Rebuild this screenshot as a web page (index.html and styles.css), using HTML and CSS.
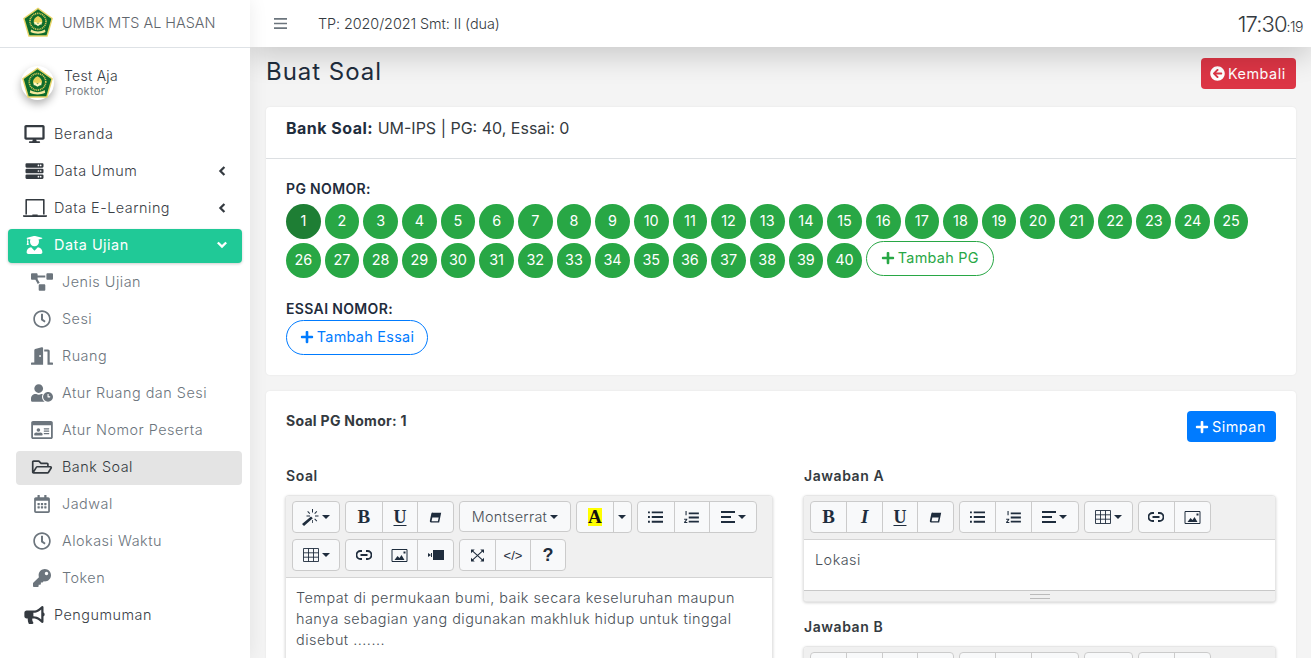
FILE: index.html
```html
<!DOCTYPE html>
<html lang="id">
<head>
<meta charset="utf-8">
<title>Buat Soal</title>
<link rel="stylesheet" href="styles.css">
</head>
<body>
<svg class="sprite" width="0" height="0" aria-hidden="true">
  <symbol id="logo" viewBox="0 0 60 60">
    <path d="M30 1 58 21 48 56H12L2 21Z" fill="#e9d56a"/>
    <path d="M30 4 55 22 46 53H14L5 22Z" fill="#0d6b2b"/>
    <circle cx="30" cy="27" r="15" fill="none" stroke="#d8c75a" stroke-width="3" stroke-dasharray="2 1.4"/>
    <path d="M30 17c6 3 9 7 8 13H22c-1-6 2-10 8-13Z" fill="#e8d25a"/>
    <path d="M23 28c4 0 6 1 7 4 1-3 3-4 7-4v5c-3 0-5 1-7 3-2-2-4-3-7-3Z" fill="#fff6c0"/>
    <path d="M17 42c8 5 18 5 26 0l1 5c-8 4-20 4-28 0Z" fill="#f3e79a"/>
  </symbol>
  <symbol id="i-desktop" viewBox="0 0 576 512"><path d="M528 0H48C21.5 0 0 21.5 0 48v320c0 26.5 21.5 48 48 48h192l-16 48h-72c-13.3 0-24 10.7-24 24s10.7 24 24 24h272c13.3 0 24-10.700 24-24s-10.700-24-24-24h-72l-16-48h192c26.500 0 48-21.500 48-48V48c0-26.500-21.500-48-48-48zm-16 352H64V64h448v288z"/></symbol>
  <symbol id="i-server" viewBox="0 0 512 512"><path fill-rule="evenodd" d="M32 32h448a32 32 0 0 1 32 32v64a32 32 0 0 1-32 32H32a32 32 0 0 1-32-32V64a32 32 0 0 1 32-32Zm400 40a24 24 0 1 0 0 48 24 24 0 0 0 0-48Zm-64 0a24 24 0 1 0 0 48 24 24 0 0 0 0-48ZM32 192h448a32 32 0 0 1 32 32v64a32 32 0 0 1-32 32H32a32 32 0 0 1-32-32v-64a32 32 0 0 1 32-32Zm400 40a24 24 0 1 0 0 48 24 24 0 0 0 0-48Zm-64 0a24 24 0 1 0 0 48 24 24 0 0 0 0-48ZM32 352h448a32 32 0 0 1 32 32v64a32 32 0 0 1-32 32H32a32 32 0 0 1-32-32v-64a32 32 0 0 1 32-32Zm400 40a24 24 0 1 0 0 48 24 24 0 0 0 0-48Zm-64 0a24 24 0 1 0 0 48 24 24 0 0 0 0-48Z"/></symbol>
  <symbol id="i-laptop" viewBox="0 0 640 480"><path fill-rule="evenodd" d="M84 0h472a20 20 0 0 1 20 20v390h-42V42H106v368H64V20A20 20 0 0 1 84 0ZM0 430h250v-14h140v14h250v24a26 26 0 0 1-26 26H26a26 26 0 0 1-26-26Z"/></symbol>
  <symbol id="i-grad" viewBox="0 0 448 512"><path d="M319.400 320.600 224 416l-95.400-95.400C57.100 323.700 0 382.200 0 454.400v9.600c0 26.500 21.500 48 48 48h352c26.500 0 48-21.500 48-48v-9.600c0-72.200-57.100-130.700-128.600-133.800ZM13.600 79.800l6.400 1.500v58.400c-7 4.200-12 11.500-12 20.300 0 8.400 4.600 15.400 11.100 19.700L3.500 242c-1.700 6.900 2.100 14 7.600 14h41.800c5.500 0 9.300-7.100 7.600-14l-15.600-62.300C51.400 175.400 56 168.400 56 160c0-8.800-5-16.100-12-20.300V87.100l66 15.900c-8.600 17.200-14 36.400-14 57 0 70.700 57.300 128 128 128s128-57.300 128-128c0-20.600-5.300-39.800-14-57l96.300-23.200c18.200-4.400 18.200-27.100 0-31.500l-190.400-46c-13-3.100-26.700-3.100-39.700 0L13.600 48.200c-18.100 4.400-18.100 27.200 0 31.600Z"/></symbol>
  <symbol id="i-diagram" viewBox="0 0 640 512"><path d="M384 320H256c-17.700 0-32 14.300-32 32v128c0 17.700 14.300 32 32 32h128c17.700 0 32-14.300 32-32V352c0-17.700-14.300-32-32-32ZM192 32c0-17.700-14.300-32-32-32H32C14.300 0 0 14.300 0 32v128c0 17.700 14.300 32 32 32h95.700l73.200 128c11-19.100 31.600-32 55.100-32h.3L192 175.300V128h224V64H192V32ZM608 0H480c-17.700 0-32 14.300-32 32v128c0 17.700 14.300 32 32 32h128c17.700 0 32-14.300 32-32V32c0-17.700-14.300-32-32-32Z"/></symbol>
  <symbol id="i-clock" viewBox="0 0 512 512"><path d="M256 8C119 8 8 119 8 256s111 248 248 248 248-111 248-248S393 8 256 8Zm0 448c-110.500 0-200-89.500-200-200S145.500 56 256 56s200 89.500 200 200-89.500 200-200 200Zm61.800-104.400-84.900-61.700c-3.100-2.300-4.900-5.900-4.900-9.700V116c0-6.600 5.400-12 12-12h32c6.600 0 12 5.400 12 12v141.700l66.800 48.600c5.400 3.900 6.500 11.400 2.600 16.800L334.600 349c-3.900 5.300-11.400 6.500-16.800 2.600Z"/></symbol>
  <symbol id="i-door" viewBox="0 0 640 512"><path d="M624 448h-80V113.450C544 86.190 522.470 64 496 64H384v64h96v384h144c8.840 0 16-7.160 16-16v-32c0-8.840-7.160-16-16-16ZM312.240 1.010l-192 49.740C105.990 54.440 96 67.700 96 82.920V448H16c-8.840 0-16 7.160-16 16v32c0 8.840 7.160 16 16 16h336V33.180c0-21.580-19.560-37.410-39.760-32.170ZM264 288c-13.250 0-24-14.330-24-32s10.750-32 24-32 24 14.330 24 32-10.750 32-24 32Z"/></symbol>
  <symbol id="i-userclock" viewBox="0 0 640 512"><path d="M496 224c-79.590 0-144 64.410-144 144s64.410 144 144 144 144-64.410 144-144-64.410-144-144-144Zm64 150.290c0 5.340-4.370 9.710-9.710 9.710h-60.570c-5.340 0-9.710-4.370-9.710-9.710v-76.570c0-5.340 4.370-9.710 9.710-9.710h12.570c5.340 0 9.710 4.370 9.710 9.710V352h38.290c5.340 0 9.710 4.370 9.710 9.710v12.580ZM320 368c0-27.770 7.180-53.800 19.720-76.570-7.700-1.400-15.550-3.430-23.720-3.430h-16.700c-22.200 10.200-46.900 16-72.300 16s-50-5.800-72.300-16H134.400C60.200 288 0 348.200 0 422.400V464c0 26.500 21.500 48 48 48h347.100C349.900 480.700 320 428.100 320 368ZM224 256c70.700 0 128-57.300 128-128S294.700 0 224 0 96 57.300 96 128s57.300 128 128 128Z"/></symbol>
  <symbol id="i-idcard" viewBox="0 0 576 480"><path d="M528 0H48C21.500 0 0 21.500 0 48v384c0 26.500 21.500 48 48 48h480c26.500 0 48-21.500 48-48V48c0-26.500-21.500-48-48-48Zm0 432H48V112h480v320ZM192 288a48 48 0 1 0 0-96 48 48 0 0 0 0 96Zm-96 96h192c8.800 0 16-6 16-16v-16c0-26.500-25-48-56-48h-8c-15 8-30 10-48 10s-33-2-48-10h-8c-31 0-56 21.500-56 48v16c0 10 7.200 16 16 16Zm248-32h128c4.400 0 8-3.600 8-8v-16c0-4.400-3.600-8-8-8H344c-4.400 0-8 3.600-8 8v16c0 4.400 3.600 8 8 8Zm0-64h128c4.400 0 8-3.600 8-8v-16c0-4.400-3.600-8-8-8H344c-4.400 0-8 3.600-8 8v16c0 4.400 3.600 8 8 8Zm0-64h128c4.400 0 8-3.600 8-8v-16c0-4.400-3.600-8-8-8H344c-4.400 0-8 3.600-8 8v16c0 4.400 3.600 8 8 8Z"/></symbol>
  <symbol id="i-folder" viewBox="0 0 576 512"><path d="M527.900 224H480v-48c0-26.500-21.500-48-48-48H272l-64-64H48C21.500 64 0 85.500 0 112v288c0 26.500 21.500 48 48 48h400c16.500 0 31.900-8.500 40.700-22.600l79.900-128c20-31.900-3-73.400-40.700-73.400ZM48 118c0-3.300 2.700-6 6-6h134.100l64 64H426c3.300 0 6 2.700 6 6v42H152c-16.800 0-32.400 8.800-41.100 23.200L48 351.400V118Zm400 282H72l77.200-128H528l-80 128Z"/></symbol>
  <symbol id="i-calendar" viewBox="0 0 448 512"><path d="M148 288h-40c-6.600 0-12-5.400-12-12v-40c0-6.600 5.400-12 12-12h40c6.600 0 12 5.400 12 12v40c0 6.600-5.400 12-12 12Zm108-12v-40c0-6.600-5.400-12-12-12h-40c-6.600 0-12 5.400-12 12v40c0 6.600 5.400 12 12 12h40c6.600 0 12-5.400 12-12Zm96 0v-40c0-6.600-5.400-12-12-12h-40c-6.600 0-12 5.400-12 12v40c0 6.600 5.400 12 12 12h40c6.600 0 12-5.400 12-12Zm-96 96v-40c0-6.600-5.400-12-12-12h-40c-6.600 0-12 5.400-12 12v40c0 6.600 5.400 12 12 12h40c6.600 0 12-5.400 12-12Zm-96 0v-40c0-6.600-5.400-12-12-12h-40c-6.600 0-12 5.400-12 12v40c0 6.600 5.400 12 12 12h40c6.600 0 12-5.400 12-12Zm192 0v-40c0-6.600-5.400-12-12-12h-40c-6.600 0-12 5.400-12 12v40c0 6.600 5.400 12 12 12h40c6.600 0 12-5.400 12-12Zm96-260v352c0 26.500-21.500 48-48 48H48c-26.500 0-48-21.500-48-48V112c0-26.500 21.500-48 48-48h48V12c0-6.600 5.400-12 12-12h40c6.600 0 12 5.400 12 12v52h128V12c0-6.600 5.400-12 12-12h40c6.600 0 12 5.400 12 12v52h48c26.500 0 48 21.500 48 48Zm-48 346V160H48v298c0 3.300 2.700 6 6 6h340c3.300 0 6-2.700 6-6Z"/></symbol>
  <symbol id="i-key" viewBox="0 0 512 512"><path d="M512 176.001C512 273.203 433.202 352 336 352c-11.220 0-22.190-1.062-32.827-3.069l-24.012 27.014A23.999 23.999 0 0 1 261.223 384H224v40c0 13.255-10.745 24-24 24h-40v40c0 13.255-10.745 24-24 24H24c-13.255 0-24-10.745-24-24v-78.059c0-6.365 2.529-12.470 7.029-16.971l161.802-161.802C163.108 213.814 160 195.271 160 176 160 78.798 238.797.001 335.999 0 433.488-.001 512 78.511 512 176.001ZM336 128c0 26.510 21.490 48 48 48s48-21.490 48-48-21.490-48-48-48-48 21.490-48 48Z"/></symbol>
  <symbol id="i-bullhorn" viewBox="0 0 576 512"><path d="M576 240c0-23.630-12.950-44.040-32-55.120V32.010C544 23.260 537.020 0 512 0c-7.120 0-14.190 2.380-19.980 7.020l-85.030 68.030C364.280 109.190 310.660 128 256 128H64c-35.350 0-64 28.650-64 64v96c0 35.350 28.650 64 64 64h33.700c-1.390 10.480-2.180 21.140-2.180 32 0 39.770 9.260 77.350 25.560 110.940 5.190 10.690 16.520 17.060 28.400 17.060h74.280c26.050 0 41.690-29.840 25.900-50.560-16.400-21.520-26.150-48.360-26.150-77.440 0-11.110 1.620-21.790 4.410-32H256c54.660 0 108.280 18.810 150.980 52.950l85.030 68.030a32.023 32.023 0 0 0 19.980 7.020c24.920 0 32-22.780 32-32V295.130C563.050 284.040 576 263.630 576 240Zm-96 141.420-33.050-26.440C392.950 311.780 325.120 288 256 288v-96c69.120 0 136.950-23.780 190.950-66.980L480 98.580v282.840Z"/></symbol>
  <symbol id="i-plus" viewBox="0 0 448 512"><path d="M416 208H272V64c0-17.670-14.330-32-32-32h-32c-17.670 0-32 14.330-32 32v144H32c-17.670 0-32 14.330-32 32v32c0 17.670 14.330 32 32 32h144v144c0 17.670 14.330 32 32 32h32c17.670 0 32-14.330 32-32V304h144c17.670 0 32-14.330 32-32v-32c0-17.670-14.330-32-32-32Z"/></symbol>
  <symbol id="i-back" viewBox="0 0 512 512"><path d="M256 504C119 504 8 393 8 256S119 8 256 8s248 111 248 248-111 248-248 248Zm28.900-143.600L209.400 288H392c13.300 0 24-10.700 24-24v-16c0-13.300-10.700-24-24-24H209.400l75.500-72.400c9.700-9.300 9.900-24.800.4-34.300l-11-10.900c-9.400-9.400-24.600-9.400-33.900 0L107.700 239c-9.400 9.400-9.400 24.600 0 33.900l132.700 132.700c9.400 9.400 24.600 9.400 33.900 0l11-10.900c9.500-9.500 9.300-25-.4-34.300Z"/></symbol>
  <symbol id="e-magic" viewBox="0 0 17 17"><path d="M0 15 9 7.500l1.800 1.800L2 17zM10 0h1v3.500h-1zM10 11h.8v3H10zM13 6.500h3.500v1H13zM4.500 6.500H8v1H4.500zM14.500 2l.7.700-2.200 2.200-.7-.7zM6 2l2.200 2.200-.7.700-2.200-2.200zM13 9.500l2.200 2.200-.7.700-2.200-2.200z"/></symbol>
  <symbol id="e-eraser" viewBox="0 0 16 14"><path fill-rule="evenodd" d="M5 1h10l-2.500 12H2.500A1.500 1.500 0 0 1 1 11.300L2.800 2.500A2 2 0 0 1 5 1Zm-.9 6-.9 4.200c0 .3.100.5.500.5h7.200l1-4.700Z"/></symbol>
  <symbol id="e-ul" viewBox="0 0 16 12"><path d="M0 0h2v2H0zM4 0h12v2H4zM0 5h2v2H0zM4 5h12v2H4zM0 10h2v2H0zM4 10h12v2H4z"/></symbol>
  <symbol id="e-ol" viewBox="0 0 16 13"><path d="M5 1.500h11v2H5zM5 6h11v2H5zM5 10.500h11v2H5zM1.500 0h1.200v4.500H1.500zM0 8.500h3.400v1.100L1.600 11.900h1.900V13H0v-1L2 9.600H0z"/></symbol>
  <symbol id="e-align" viewBox="0 0 14 12"><path d="M0 0h14v2H0zM0 5h10v2H0zM0 10h14v2H0z"/></symbol>
  <symbol id="e-table" viewBox="0 0 16 14"><path fill="none" stroke="currentColor" stroke-width=".9" d="M.5.500h15v13H.5zM.5 4.800h15M.5 9.200h15M5.500.500v13M10.500.500v13"/></symbol>
  <symbol id="e-link" viewBox="0 0 16 10"><path fill="none" stroke="currentColor" stroke-width="1.800" d="M6 1H4.500a4 4 0 0 0 0 8H6M10 1h1.500a4 4 0 0 1 0 8H10M4.500 5h7"/></symbol>
  <symbol id="e-pic" viewBox="0 0 16 13"><path fill="none" stroke="currentColor" d="M.5.500h15v12H.5z"/><path d="M3 11l3-4 2 2 2-3 3 5zM12 2.500h2v2h-2z"/></symbol>
  <symbol id="e-video" viewBox="0 0 16 10"><path d="M5 0h11v10H5zM0 3l3 2-3 2zM3 3h1v4H3z"/></symbol>
  <symbol id="e-full" viewBox="0 0 14 13"><path d="M0 0h4L0 4zM14 0h-4l4 4zM0 13h4l-4-4zM14 13h-4l4-4z"/><path fill="none" stroke="currentColor" stroke-width="1.200" d="M1.500 1.500 12.500 11.500M12.500 1.500 1.500 11.500"/></symbol>
</svg>

<div class="app">
  <aside class="sidebar">
    <div class="brand">
      <svg class="brand-logo"><use href="#logo"/></svg>
      <span class="brand-text">UMBK MTS AL HASAN</span>
    </div>
    <div class="user">
      <span class="avatar"><svg class="avatar-logo"><use href="#logo"/></svg></span>
      <div class="user-info">
        <div class="user-name">Test Aja</div>
        <div class="user-role">Proktor</div>
      </div>
    </div>
    <nav class="nav">
      <a class="nav-item"><svg class="nav-icon"><use href="#i-desktop"/></svg><span>Beranda</span></a>
      <a class="nav-item"><svg class="nav-icon"><use href="#i-server"/></svg><span>Data Umum</span><svg class="chev" viewBox="0 0 10 12"><path d="M8 1 3 6l5 5" fill="none" stroke="currentColor" stroke-width="2.800"/></svg></a>
      <a class="nav-item"><svg class="nav-icon nav-icon-wide"><use href="#i-laptop"/></svg><span>Data E-Learning</span><svg class="chev" viewBox="0 0 10 12"><path d="M8 1 3 6l5 5" fill="none" stroke="currentColor" stroke-width="2.800"/></svg></a>
      <a class="nav-item active"><svg class="nav-icon"><use href="#i-grad"/></svg><span>Data Ujian</span><svg class="chev chev-down" viewBox="0 0 12 10"><path d="m1 2 5 5 5-5" fill="none" stroke="currentColor" stroke-width="2.800"/></svg></a>
      <a class="nav-item sub"><svg class="nav-icon"><use href="#i-diagram"/></svg><span>Jenis Ujian</span></a>
      <a class="nav-item sub"><svg class="nav-icon"><use href="#i-clock"/></svg><span>Sesi</span></a>
      <a class="nav-item sub"><svg class="nav-icon"><use href="#i-door"/></svg><span>Ruang</span></a>
      <a class="nav-item sub"><svg class="nav-icon"><use href="#i-userclock"/></svg><span>Atur Ruang dan Sesi</span></a>
      <a class="nav-item sub"><svg class="nav-icon"><use href="#i-idcard"/></svg><span>Atur Nomor Peserta</span></a>
      <a class="nav-item sub selected"><svg class="nav-icon"><use href="#i-folder"/></svg><span>Bank Soal</span></a>
      <a class="nav-item sub"><svg class="nav-icon"><use href="#i-calendar"/></svg><span>Jadwal</span></a>
      <a class="nav-item sub"><svg class="nav-icon"><use href="#i-clock"/></svg><span>Alokasi Waktu</span></a>
      <a class="nav-item sub"><svg class="nav-icon"><use href="#i-key"/></svg><span>Token</span></a>
      <a class="nav-item"><svg class="nav-icon"><use href="#i-bullhorn"/></svg><span>Pengumuman</span></a>
    </nav>
  </aside>

  <div class="main">
    <header class="topbar">
      <svg class="burger" viewBox="0 0 12 10"><path d="M0 0h12v1.600H0zM0 4.200h12v1.600H0zM0 8.400h12V10H0z"/></svg>
      <span class="period">TP: 2020/2021 Smt: II (dua)</span>
      <span class="clock">17:30<small>:19</small></span>
    </header>
    <main class="content">
      <div class="page-head">
        <h1 class="page-title">Buat Soal</h1>
        <a class="btn btn-red"><svg class="btn-icon btn-icon-lg"><use href="#i-back"/></svg>Kembali</a>
      </div>

      <section class="card">
        <div class="card-head"><b>Bank Soal:</b> UM-IPS | PG: 40, Essai: 0</div>
        <div class="card-body">
          <div class="label">PG NOMOR:</div>
          <div class="numbers">
            <a class="num current">1</a><a class="num">2</a><a class="num">3</a><a class="num">4</a><a class="num">5</a><a class="num">6</a><a class="num">7</a><a class="num">8</a><a class="num">9</a><a class="num">10</a>
            <a class="num">11</a><a class="num">12</a><a class="num">13</a><a class="num">14</a><a class="num">15</a><a class="num">16</a><a class="num">17</a><a class="num">18</a><a class="num">19</a><a class="num">20</a>
            <a class="num">21</a><a class="num">22</a><a class="num">23</a><a class="num">24</a><a class="num">25</a><a class="num">26</a><a class="num">27</a><a class="num">28</a><a class="num">29</a><a class="num">30</a>
            <a class="num">31</a><a class="num">32</a><a class="num">33</a><a class="num">34</a><a class="num">35</a><a class="num">36</a><a class="num">37</a><a class="num">38</a><a class="num">39</a><a class="num">40</a>
            <a class="pill pill-green"><svg class="btn-icon"><use href="#i-plus"/></svg>Tambah PG</a>
          </div>
          <div class="label label-essai">ESSAI NOMOR:</div>
          <a class="pill pill-blue"><svg class="btn-icon"><use href="#i-plus"/></svg>Tambah Essai</a>
        </div>
      </section>

      <section class="card card-soal">
        <div class="soal-head">
          <b class="soal-title">Soal PG Nomor: 1</b>
          <a class="btn btn-blue"><svg class="btn-icon"><use href="#i-plus"/></svg>Simpan</a>
        </div>
        <div class="soal-grid">
          <div>
            <div class="field-label">Soal</div>
            <div class="editor">
              <div class="toolbar">
                <div class="grp"><span class="tb w45"><svg class="ic17"><use href="#e-magic"/></svg><i class="caret"></i></span></div>
                <div class="grp"><span class="tb glyph-b">B</span><span class="tb glyph-u">U</span><span class="tb"><svg class="ic13"><use href="#e-eraser"/></svg></span></div>
                <div class="grp grp-font"><span class="tb tb-font">Montserrat<i class="caret"></i></span></div>
                <div class="grp"><span class="tb"><span class="hl">A</span></span><span class="tb w18"><i class="caret caret-solo"></i></span></div>
                <div class="grp"><span class="tb"><svg class="ic15"><use href="#e-ul"/></svg></span><span class="tb"><svg class="ic15"><use href="#e-ol"/></svg></span><span class="tb w46"><svg class="ic14"><use href="#e-align"/></svg><i class="caret"></i></span></div>
                <div class="grp"><span class="tb w45"><svg class="ic16 thin"><use href="#e-table"/></svg><i class="caret"></i></span></div>
                <div class="grp"><span class="tb"><svg class="ic16 h10"><use href="#e-link"/></svg></span><span class="tb"><svg class="ic17w"><use href="#e-pic"/></svg></span><span class="tb"><svg class="ic16 h10"><use href="#e-video"/></svg></span></div>
                <div class="grp grp-tight"><span class="tb"><svg class="ic13"><use href="#e-full"/></svg></span><span class="tb glyph-code">&lt;/&gt;</span><span class="tb glyph-q">?</span></div>
              </div>
              <div class="editable">Tempat di permukaan bumi, baik secara keseluruhan maupun hanya sebagian yang digunakan makhluk hidup untuk tinggal disebut .......</div>
            </div>
          </div>
          <div>
            <div class="field-label">Jawaban A</div>
            <div class="editor">
              <div class="toolbar">
                <div class="grp grp-four"><span class="tb glyph-b">B</span><span class="tb glyph-i">I</span><span class="tb glyph-u">U</span><span class="tb"><svg class="ic13"><use href="#e-eraser"/></svg></span></div>
                <div class="grp"><span class="tb"><svg class="ic15"><use href="#e-ul"/></svg></span><span class="tb"><svg class="ic15"><use href="#e-ol"/></svg></span><span class="tb w46"><svg class="ic14"><use href="#e-align"/></svg><i class="caret"></i></span></div>
                <div class="grp"><span class="tb w47"><svg class="ic16 thin"><use href="#e-table"/></svg><i class="caret"></i></span></div>
                <div class="grp"><span class="tb"><svg class="ic16 h10"><use href="#e-link"/></svg></span><span class="tb"><svg class="ic17w"><use href="#e-pic"/></svg></span></div>
              </div>
              <div class="editable editable-short">Lokasi</div>
              <div class="statusbar"><i class="grip"></i></div>
            </div>
            <div class="field-label field-next">Jawaban B</div>
            <div class="editor">
              <div class="toolbar">
                <div class="grp grp-four"><span class="tb"></span><span class="tb"></span><span class="tb"></span><span class="tb"></span></div>
                <div class="grp"><span class="tb"></span><span class="tb"></span><span class="tb w46"></span></div>
                <div class="grp"><span class="tb w47"></span></div>
                <div class="grp"><span class="tb"></span><span class="tb"></span></div>
              </div>
            </div>
          </div>
        </div>
      </section>
    </main>
  </div>
</div>
</body>
</html>
```

FILE: styles.css
```css
* { box-sizing: border-box; }
html, body { margin: 0; height: 658px; overflow: hidden; }
body {
  font-family: Inter, "Noto Sans", sans-serif;
  font-size: 14px;
  color: #1f2d3d;
  background: #f4f4f4;
}
a { text-decoration: none; }
.sprite { position: absolute; }

.app { display: flex; height: 658px; }

/* sidebar */
.sidebar {
  width: 250px;
  flex: none;
  background: #fff;
  box-shadow: 0 0 18px rgba(0,0,0,.08);
  position: relative;
  z-index: 2;
}
.brand {
  height: 48px;
  border-bottom: 1px solid #dee2e6;
  display: flex;
  align-items: center;
  padding: 0 0 2px 22px;
}
.brand-logo { width: 32px; height: 32px; margin-right: 8px; }
.brand-text { font-size: 14.4px; font-weight: 300; color: #5f666d; letter-spacing: 0; white-space: nowrap; }
.user { display: flex; align-items: center; height: 70px; padding: 0 0 0 21px; }
.avatar {
  width: 33px; height: 34px; border-radius: 50%;
  background: #fff;
  box-shadow: 0 4px 8px rgba(0,0,0,.3);
  display: flex; align-items: center; justify-content: center;
  margin-right: 10px;
}
.avatar-logo { width: 33px; height: 33px; }
.user-info { margin-top: -2px; }
.user-name { font-size: 14px; line-height: 17px; color: #343a40; font-weight: 300; letter-spacing: .02em; }
.user-role { font-size: 11px; line-height: 12px; margin: 1px 0 0 1px; color: #7b8288; letter-spacing: .03em; }

.nav { display: flex; flex-direction: column; gap: 3px; padding: 0 8px; }
.nav-item {
  height: 34px;
  padding: 0 12px 3px 16px;
  display: flex;
  align-items: center;
  border-radius: 4px;
  color: #3a4046;
  font-size: 14.4px;
  font-weight: 300;
  letter-spacing: .035em;
}
.nav-item > span { flex: 1; }
.nav-icon { width: 21px; height: 18px; margin-right: 9px; fill: #343a40; flex: none; }
.nav-icon-wide { width: 24px; margin-left: -1px; margin-right: 7px; }
.chev { width: 8px; height: 10px; color: #343a40; flex: none; margin-right: 4px; }
.nav-item.active {
  background: #20c997;
  color: #fff;
  font-weight: 400;
  box-shadow: 0 1px 3px rgba(0,0,0,.2);
}
.active .nav-icon { fill: #fff; }
.chev-down { width: 10px; color: #fff; margin-right: 3px; }
.nav-item.sub { margin-left: 8px; padding-left: 15px; color: #6c757d; }
.sub .nav-icon { fill: #6c757d; width: 22px; margin-right: 9px; }
.nav-item.selected { background: #e4e4e4; color: #343a40; }
.selected .nav-icon { fill: #343a40; }

/* main column */
.main { flex: 1; min-width: 0; display: flex; flex-direction: column; }
.topbar {
  height: 47px;
  flex: none;
  background: #fff;
  display: flex;
  align-items: center;
  padding: 0 8px 0 24px;
  box-shadow: 0 10px 28px rgba(0,0,0,.17);
  position: relative;
  z-index: 1;
}
.burger { width: 13px; height: 11px; fill: #6c757d; margin-right: 31px; }
.period { font-size: 14.4px; font-weight: 300; color: #343a40; flex: 1; letter-spacing: -.07px; }
.clock { font-size: 22px; font-weight: 300; color: #343a40; letter-spacing: -.9px; }
.clock small { font-size: 14px; letter-spacing: -.5px; }

.content { padding: 11px 15px 0 16px; }
.page-head { display: flex; justify-content: space-between; align-items: flex-start; margin-bottom: 18px; }
.page-title { margin: 0; font-size: 24px; line-height: 28px; font-weight: 400; color: #1f2d3d; letter-spacing: .04em; }

.btn {
  display: inline-flex; align-items: center;
  height: 31px; padding: 0 10px 0 9px;
  border-radius: 4px; color: #fff;
  font-size: 14.4px; letter-spacing: .035em;
}
.btn-red { background: #dc3545; width: 95px; }
.btn-blue { background: #007bff; padding-left: 8px; width: 89px; }
.btn-icon { width: 14px; height: 14px; fill: currentColor; margin-right: 3px; flex: none; }
.btn-icon-lg { width: 15px; height: 15px; }

.card { background: #fff; border-radius: 4px; box-shadow: 0 0 2px rgba(0,0,0,.08); margin-bottom: 16px; }
.card-head {
  height: 52px;
  padding: 11px 20px 0;
  font-size: 16px;
  line-height: 20px;
  border-bottom: 1px solid #dcdfe2;
  color: #343a40;
}
.card-head b { font-weight: 700; color: #1f2d3d; letter-spacing: .03em; }
.card-body { padding: 19px 20px 20px; height: 216px; }
.label { font-size: 14px; line-height: 21px; font-weight: 600; color: #1f2d3d; letter-spacing: .025em; }
.numbers { display: flex; flex-wrap: wrap; gap: 4px; margin-top: 5px; }
.num {
  width: 34.67px; height: 35px; border-radius: 50%;
  background: #28a745; color: #fff;
  display: flex; align-items: center; justify-content: center;
  font-size: 14.4px; padding-bottom: 3px;
}
.num.current { background: #1e7e34; }
.pill {
  display: inline-flex; align-items: center; justify-content: center;
  height: 35px; border-radius: 18px; background: #fff;
  border: 1px solid; font-size: 14.4px; padding-bottom: 2px; letter-spacing: .02em;
}
.pill-green { color: #28a745; border-color: #28a745; width: 128px; margin-top: -2px; }
.pill-blue { color: #007bff; border-color: #007bff; width: 142px; margin-top: 1px; }
.label-essai { margin-top: 20px; }

.card-soal { padding: 20px 20px 0; }
.soal-head { display: flex; justify-content: space-between; align-items: flex-start; height: 31px; }
.soal-title { font-size: 14px; line-height: 20px; font-weight: 700; color: #343a40; letter-spacing: .02em; }
.soal-grid { display: grid; grid-template-columns: 487px 472px; column-gap: 31px; margin-top: 23px; }
.field-label { font-size: 14px; line-height: 21px; font-weight: 600; color: #343a40; margin-bottom: 9px; letter-spacing: .04em; }
.field-next { margin-top: 14px; }

.editor {
  margin-left: -1px;
  background: #fff;
  border: 1px solid #e6e6e6;
  border-radius: 4px;
  box-shadow: 0 1px 3px rgba(0,0,0,.18);
  overflow: hidden;
}
.toolbar {
  background: #f0f0f0;
  padding: 5px 6px 6px;
  display: flex; flex-wrap: wrap; gap: 6px 5px;
  border-bottom: 1px solid #d4d4d4;
}
.grp {
  display: flex; height: 32px;
  background: #f8f9fa;
  border: 1px solid #cbcbcb;
  border-radius: 4px;
}
.grp-font { height: 31px; }
.tb {
  width: 35.67px;
  display: flex; align-items: center; justify-content: center;
  border-left: 1px solid #cbcbcb;
  color: #1f2d3d;
  font-size: 15px;
}
.grp-tight .tb { width: 35px; }
.grp-four .tb { width: 35.4px; }
.tb svg { fill: #1f2d3d; color: #1f2d3d; }
.tb:first-child { border-left: 0; }
.w45 { width: 46px; }
.w46 { width: 46.67px; }
.w47 { width: 47px; }
.w18 { width: 18.3px; }
.tb-font { width: 110px; font-size: 14.4px; font-weight: 300; color: #495057; letter-spacing: .02em; }
.glyph-b, .glyph-u, .glyph-i, .hl { font-family: "Liberation Serif", serif; font-weight: 700; font-size: 19px; }
.glyph-u { text-decoration: underline; text-decoration-thickness: 1px; text-underline-offset: 2px; font-size: 18px; }
.glyph-i { font-style: italic; }
.hl { background: #ff0; width: 14px; height: 18px; display: flex; align-items: center; justify-content: center; color: #111; }
.glyph-code { font-size: 13px; font-family: "Liberation Sans", sans-serif; }
.glyph-q { font-family: "Liberation Sans", sans-serif; font-weight: 700; font-size: 18px; }
.caret {
  display: inline-block; width: 0; height: 0;
  border: 4px solid transparent; border-top-color: #1f2d3d; border-bottom: 0;
  margin-left: 3px;
}
.caret-solo { margin-left: 0; }
.ic13 { width: 13px; height: 13px; }
.ic14 { width: 14px; height: 12px; }
.ic15 { width: 15px; height: 12px; }
.ic16 { width: 16px; height: 14px; }
.ic17 { width: 17px; height: 17px; }
.ic17w { width: 17px; height: 13px; }
.h10 { height: 10px; }
.thin { color: #495057; }

.editable {
  padding: 9px 10px 10px;
  font-size: 14.4px;
  line-height: 21px;
  font-weight: 300;
  color: #495057;
  letter-spacing: .034em;
  min-height: 120px;
}
.editable-short { height: 50px; min-height: 50px; padding-left: 11px; }
.statusbar {
  height: 11px; background: #f0f0f0; border-top: 1px solid #c8c8c8;
  display: flex; justify-content: center; align-items: center;
}
.grip { width: 20px; height: 5px; border-top: 1px solid #bbb; border-bottom: 1px solid #bbb; }
```
